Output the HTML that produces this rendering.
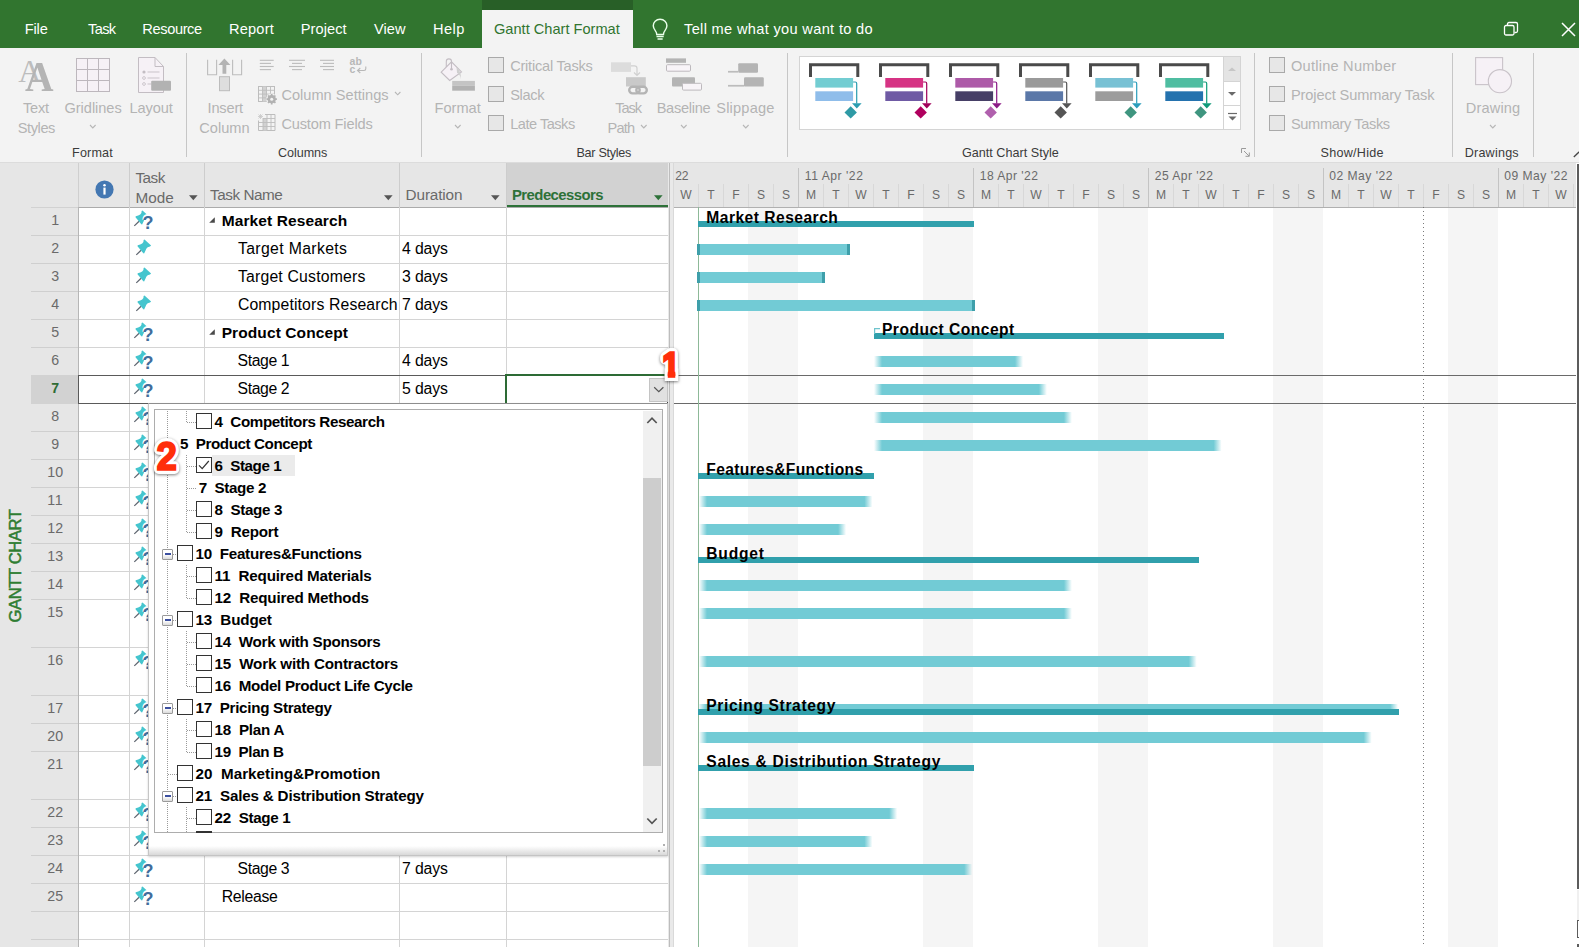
<!DOCTYPE html>
<html><head><meta charset='utf-8'><title>Gantt Chart</title><style>
html,body{margin:0;padding:0;}
body{width:1579px;height:947px;position:relative;overflow:hidden;background:#fff;font-family:'Liberation Sans',sans-serif;}
#r{position:absolute;left:0;top:0;width:1579px;height:947px;overflow:hidden;}
#r div{position:absolute;box-sizing:border-box;}
#r svg{position:absolute;overflow:visible;}
.t{position:absolute;white-space:pre;}
</style></head><body><div id='r'>
<div style="left:0px;top:0px;width:1579px;height:47.6px;background:#31752f;"></div>
<div style="left:482px;top:0px;width:151px;height:10px;background:#285f27;"></div>
<div style="left:482px;top:10px;width:151px;height:38px;background:#f3f3f3;"></div>
<span class="t" style="left:24.80px;top:18.84px;font-size:14.6px;line-height:20px;color:#fff;letter-spacing:-0.179px;">File</span>
<span class="t" style="left:88.00px;top:18.84px;font-size:14.6px;line-height:20px;color:#fff;letter-spacing:-0.629px;">Task</span>
<span class="t" style="left:142.30px;top:18.84px;font-size:14.6px;line-height:20px;color:#fff;letter-spacing:-0.371px;">Resource</span>
<span class="t" style="left:229.00px;top:18.84px;font-size:14.6px;line-height:20px;color:#fff;letter-spacing:0.198px;">Report</span>
<span class="t" style="left:300.80px;top:18.84px;font-size:14.6px;line-height:20px;color:#fff;letter-spacing:0.054px;">Project</span>
<span class="t" style="left:374.00px;top:18.84px;font-size:14.6px;line-height:20px;color:#fff;letter-spacing:0.056px;">View</span>
<span class="t" style="left:433.00px;top:18.84px;font-size:14.6px;line-height:20px;color:#fff;letter-spacing:0.446px;">Help</span>
<span class="t" style="left:494.00px;top:18.84px;font-size:14.6px;line-height:20px;color:#31752f;">Gantt Chart Format</span>
<span class="t" style="left:684.00px;top:18.84px;font-size:14.6px;line-height:20px;color:#fff;letter-spacing:0.330px;">Tell me what you want to do</span>
<svg style="left:650.3px;top:17.6px" width="20.2" height="24.6" viewBox="0 0 18 22"><path d="M9 1.2c-3.6 0-6.1 2.6-6.1 5.8 0 2 .9 3.3 1.9 4.5.8 1 1.2 1.9 1.2 3.2h6c0-1.3.4-2.2 1.2-3.2 1-1.2 1.9-2.5 1.9-4.5 0-3.2-2.500-5.800-6.100-5.800z" fill="none" stroke="#e9ffe9" stroke-width="1.300"/><path d="M5.800 16.500h6.400M6.700 18.800h4.600" stroke="#e9ffe9" stroke-width="1.300" fill="none"/></svg>
<svg style="left:1503px;top:21px" width="16" height="16" viewBox="0 0 16 16"><rect x="1.5" y="4.500" width="9.500" height="9.500" rx="1.500" fill="none" stroke="#fff" stroke-width="1.300"/><path d="M4.500 4.500v-1.500a1.500 1.500 0 0 1 1.500-1.500h7a1.500 1.500 0 0 1 1.500 1.500v7a1.500 1.500 0 0 1-1.500 1.500h-1.500" fill="none" stroke="#fff" stroke-width="1.300"/></svg>
<svg style="left:1561px;top:22px" width="15" height="15" viewBox="0 0 15 15"><path d="M1 1l13 13M14 1L1 14" stroke="#fff" stroke-width="1.500" fill="none"/></svg>
<div style="left:0px;top:47.6px;width:1579px;height:115px;background:#f3f3f3;"></div>
<span class="t" style="left:18.2px;top:51.2px;font-family:'Liberation Serif',serif;font-size:32px;line-height:40px;color:#bdbdbd;">A</span>
<span class="t" style="left:24.6px;top:52.2px;font-family:'Liberation Serif',serif;font-size:42px;font-weight:700;line-height:50px;color:#b4b4b4;transform:scaleX(.94);transform-origin:left;">A</span>
<span class="t" style="left:23.10px;top:98.04px;font-size:14.6px;line-height:20px;color:#b4b4b4;letter-spacing:-0.266px;">Text</span>
<span class="t" style="left:17.75px;top:117.94px;font-size:14.6px;line-height:20px;color:#b4b4b4;letter-spacing:-0.417px;">Styles</span>
<svg style="left:76px;top:58px" width="34" height="34" viewBox="0 0 34 34"><rect x="0.5" y="0.5" width="33" height="33" fill="#f6f1f6" stroke="#bdb7bd"/><path d="M11.500 0.500v33M22.500 0.500v33M0.500 11.500h33M0.500 22.500h33" stroke="#bdb7bd" fill="none"/></svg>
<span class="t" style="left:64.50px;top:98.04px;font-size:14.6px;line-height:20px;color:#b4b4b4;letter-spacing:-0.044px;">Gridlines</span>
<svg style="left:89.1px;top:124.2px" width="7.6" height="4.9"><path d="M1 1l2.80 2.90l2.80 -2.90" fill="none" stroke="#b6b6b6" stroke-width="1.1"/></svg>
<svg style="left:138px;top:57px" width="34" height="37" viewBox="0 0 34 37"><path d="M0.500 0.500h16.500l8.500 9v26h-25z" fill="#f6f1f6" stroke="#c3bdc3"/><path d="M17 0.500v9h8.500" fill="none" stroke="#c3bdc3"/><circle cx="6" cy="15" r="1.600" fill="#c3bdc3"/><circle cx="6" cy="21" r="1.400" fill="none" stroke="#c3bdc3" stroke-width=".8"/><circle cx="6" cy="27" r="1.400" fill="none" stroke="#c3bdc3" stroke-width=".8"/><path d="M9.500 15h12M9.500 21h12M9.500 27h4" stroke="#c9c3c9" fill="none"/><rect x="13.200" y="23.800" width="19.800" height="10" rx="1" fill="#b2b2b2"/></svg>
<span class="t" style="left:129.50px;top:98.04px;font-size:14.6px;line-height:20px;color:#b4b4b4;letter-spacing:-0.088px;">Layout</span>
<span class="t" style="left:72.00px;top:142.63px;font-size:12.6px;line-height:20px;color:#3b3b3b;letter-spacing:0.185px;">Format</span>
<div style="left:186.1px;top:53px;width:1px;height:104px;background:#c6c6c6;"></div>
<svg style="left:207px;top:58px" width="36" height="34" viewBox="0 0 36 34"><path d="M0.600 1.700v15h9v-15M25.600 1.700v15h9v-15" fill="none" stroke="#bdbdbd" stroke-width="1.100"/><path d="M17.400 0.600l-6 6.300h4.100v8.800h3.800v-8.800h4.100z" fill="#b4b4b4"/><rect x="12.500" y="18.700" width="10" height="14" fill="#dedede" stroke="#bcbcbc"/></svg>
<span class="t" style="left:207.50px;top:98.04px;font-size:14.6px;line-height:20px;color:#b4b4b4;letter-spacing:-0.167px;">Insert</span>
<span class="t" style="left:199.20px;top:117.94px;font-size:14.6px;line-height:20px;color:#b4b4b4;letter-spacing:0.017px;">Column</span>
<svg style="left:0;top:0" width="1" height="1"><path d="M259.8 60.3H273.7" stroke="#bcbcbc" stroke-width="1.100"/><path d="M259.8 63.4H271.0" stroke="#bcbcbc" stroke-width="1.100"/><path d="M259.8 66.5H273.7" stroke="#bcbcbc" stroke-width="1.100"/><path d="M259.8 69.6H271.0" stroke="#bcbcbc" stroke-width="1.100"/></svg>
<svg style="left:0;top:0" width="1" height="1"><path d="M289.0 60.3H305.0" stroke="#bcbcbc" stroke-width="1.100"/><path d="M292.0 63.4H302.0" stroke="#bcbcbc" stroke-width="1.100"/><path d="M289.0 66.5H305.0" stroke="#bcbcbc" stroke-width="1.100"/><path d="M292.0 69.6H302.0" stroke="#bcbcbc" stroke-width="1.100"/></svg>
<svg style="left:0;top:0" width="1" height="1"><path d="M320.0 60.3H334.0" stroke="#bcbcbc" stroke-width="1.100"/><path d="M323.0 63.4H334.0" stroke="#bcbcbc" stroke-width="1.100"/><path d="M320.0 66.5H334.0" stroke="#bcbcbc" stroke-width="1.100"/><path d="M323.0 69.6H334.0" stroke="#bcbcbc" stroke-width="1.100"/></svg>
<span class="t" style="left:349.40px;top:51.36px;font-size:10.5px;line-height:20px;color:#b8b8b8;font-weight:700;letter-spacing:0.300px;">ab</span>
<span class="t" style="left:349.60px;top:59.36px;font-size:10.5px;line-height:20px;color:#b8b8b8;font-weight:700;">c</span>
<svg style="left:356px;top:66px" width="11" height="8" viewBox="0 0 11 8"><path d="M9.800 0.500v2.300q0 1.700 -1.700 1.700h-6.500M4.300 2l-2.800 2.500l2.800 2.500" fill="none" stroke="#b8b8b8" stroke-width="1.100"/></svg>
<svg style="left:258px;top:85.5px" width="20" height="19" viewBox="0 0 20 19"><rect x="0.500" y="0.500" width="16" height="15" fill="#f3f3f3" stroke="#bdbdbd"/><rect x="4.500" y="0.500" width="4" height="15" fill="#d2d2d2"/><path d="M4.500 0.500v15M8.500 0.500v15M12.500 0.500v9M0.500 4.300h16M0.500 8.100h16M0.500 11.900h9" stroke="#bdbdbd" fill="none" stroke-width=".9"/><circle cx="13.700" cy="13.200" r="5.600" fill="#f3f3f3"/><circle cx="13.700" cy="13.200" r="3" fill="none" stroke="#b2b2b2" stroke-width="2.200"/><path d="M13.700 8v10.400M8.500 13.200h10.400M10 9.500l7.400 7.400M17.400 9.500l-7.400 7.400" stroke="#b2b2b2" stroke-width="1.700"/><circle cx="13.700" cy="13.200" r="1.500" fill="#f3f3f3"/></svg>
<span class="t" style="left:281.40px;top:85.04px;font-size:14.6px;line-height:20px;color:#b4b4b4;letter-spacing:0.008px;">Column Settings</span>
<svg style="left:394.3px;top:90.8px" width="7.4" height="4.8"><path d="M1 1l2.70 2.80l2.70 -2.80" fill="none" stroke="#b6b6b6" stroke-width="1.1"/></svg>
<svg style="left:258.4px;top:114px" width="18" height="17" viewBox="0 0 18 17"><path d="M0.500 6.500v10h16.500v-16h-10" fill="none" stroke="#bdbdbd"/><rect x="5" y="4.500" width="4" height="12" fill="#d2d2d2"/><path d="M5 4.500v12M9 0.500v16M13 0.500v16M0.500 8.500h16.500M0.500 12.500h16.500M5 4.500h12" stroke="#bdbdbd" fill="none" stroke-width=".9"/><path d="M0.500 0.500l4 4M4.500 0.500l-4 4M2.500 0v5M0 2.500h5" stroke="#c6c6c6" stroke-width=".8"/></svg>
<span class="t" style="left:281.40px;top:113.94px;font-size:14.6px;line-height:20px;color:#b4b4b4;letter-spacing:-0.159px;">Custom Fields</span>
<span class="t" style="left:278.00px;top:142.63px;font-size:12.6px;line-height:20px;color:#3b3b3b;letter-spacing:-0.058px;">Columns</span>
<div style="left:421.0px;top:53px;width:1px;height:104px;background:#c6c6c6;"></div>
<svg style="left:440px;top:58px" width="36" height="34" viewBox="0 0 36 34"><path d="M1.200 14.200l10.300 -10.300l10 10l-11.800 8.600z" fill="#f6f1f6" stroke="#c3bdc3" stroke-width="1.100"/><path d="M11.500 11v-7.500a2.600 2.600 0 0 0 -5.200 0v5.500" fill="none" stroke="#c3bdc3" stroke-width="1.100"/><circle cx="11.500" cy="11.200" r="1.300" fill="#c3bdc3"/><path d="M16.500 9.500q4.500 2.500 4.600 12q-1 -5.500 -4 -6.500z" fill="#cfcfcf"/><rect x="12.200" y="22.900" width="22.700" height="4.800" fill="#c4c4c4"/><rect x="12.200" y="27.700" width="22.700" height="5" fill="#b2b2b2"/></svg>
<span class="t" style="left:434.50px;top:98.04px;font-size:14.6px;line-height:20px;color:#b4b4b4;">Format</span>
<svg style="left:454.2px;top:124.2px" width="7.6" height="4.9"><path d="M1 1l2.80 2.90l2.80 -2.90" fill="none" stroke="#b6b6b6" stroke-width="1.1"/></svg>
<div style="left:488px;top:57px;width:16px;height:16px;background:#e7e7e7;border:1.3px solid #a9a9a9;"></div>
<div style="left:488px;top:86px;width:16px;height:16px;background:#e7e7e7;border:1.3px solid #a9a9a9;"></div>
<div style="left:488px;top:115px;width:16px;height:16px;background:#e7e7e7;border:1.3px solid #a9a9a9;"></div>
<span class="t" style="left:510.20px;top:56.14px;font-size:14.6px;line-height:20px;color:#b4b4b4;letter-spacing:-0.236px;">Critical Tasks</span>
<span class="t" style="left:510.20px;top:85.04px;font-size:14.6px;line-height:20px;color:#b4b4b4;letter-spacing:-0.357px;">Slack</span>
<span class="t" style="left:510.20px;top:113.94px;font-size:14.6px;line-height:20px;color:#b4b4b4;letter-spacing:-0.500px;">Late Tasks</span>
<svg style="left:611px;top:62px" width="38" height="34" viewBox="0 0 38 34"><rect x="0" y="0.300" width="20" height="9.600" fill="#dcdcdc"/><path d="M20 3.800h3.500q2.500 0 2.500 2.500v6.500M23 10.500l3 3l3 -3" fill="none" stroke="#d0d0d0" stroke-width="1.200"/><rect x="15" y="15.200" width="19.800" height="9.300" fill="#c9c9c9"/><g fill="none" stroke="#b4b4b4" stroke-width="2.400"><rect x="18.200" y="24.800" width="10.500" height="6.600" rx="3.300"/><rect x="25.300" y="24.800" width="10.500" height="6.600" rx="3.300"/></g></svg>
<span class="t" style="left:615.20px;top:98.04px;font-size:14.6px;line-height:20px;color:#b4b4b4;letter-spacing:-1.054px;">Task</span>
<span class="t" style="left:607.50px;top:117.94px;font-size:14.6px;line-height:20px;color:#b4b4b4;letter-spacing:-0.783px;">Path</span>
<svg style="left:640.3px;top:124.2px" width="7.6" height="4.9"><path d="M1 1l2.80 2.90l2.80 -2.90" fill="none" stroke="#b6b6b6" stroke-width="1.1"/></svg>
<svg style="left:666px;top:58px" width="37" height="34" viewBox="0 0 37 34"><rect x="0" y="0.400" width="20" height="4.400" fill="#b4b4b4"/><rect x="0.500" y="6.700" width="24" height="6.500" rx="1" fill="#f8f4f8" stroke="#bdb9bd"/><rect x="6" y="19.200" width="23" height="9.300" rx="1" fill="#b4b4b4"/><rect x="16.500" y="25.300" width="19" height="6.800" rx="1" fill="#f8f4f8" stroke="#bdb9bd"/></svg>
<span class="t" style="left:656.70px;top:98.04px;font-size:14.6px;line-height:20px;color:#b4b4b4;letter-spacing:-0.298px;">Baseline</span>
<svg style="left:680.2px;top:124.2px" width="7.6" height="4.9"><path d="M1 1l2.80 2.90l2.80 -2.90" fill="none" stroke="#b6b6b6" stroke-width="1.1"/></svg>
<svg style="left:728px;top:63px" width="37" height="25" viewBox="0 0 37 25"><rect x="10.200" y="0.200" width="19.800" height="9.500" rx="1.200" fill="#b4b4b4"/><rect x="0" y="7.900" width="10.200" height="1.700" fill="#bcbcbc"/><rect x="16" y="14.200" width="19.800" height="9.400" rx="1.200" fill="#b4b4b4"/><rect x="0" y="21.900" width="16" height="1.700" fill="#bcbcbc"/></svg>
<span class="t" style="left:716.20px;top:98.04px;font-size:14.6px;line-height:20px;color:#b4b4b4;letter-spacing:0.211px;">Slippage</span>
<svg style="left:742.0px;top:124.2px" width="7.6" height="4.9"><path d="M1 1l2.80 2.90l2.80 -2.90" fill="none" stroke="#b6b6b6" stroke-width="1.1"/></svg>
<span class="t" style="left:576.50px;top:142.63px;font-size:12.6px;line-height:20px;color:#3b3b3b;letter-spacing:-0.291px;">Bar Styles</span>
<div style="left:787.1px;top:53px;width:1px;height:104px;background:#c6c6c6;"></div>
<div style="left:799px;top:55.5px;width:442px;height:74px;background:#fff;border:1px solid #d4d4d4;"></div>
<div style="left:1222.5px;top:55.5px;width:18.5px;height:26px;background:#e4e4e4;border:1px solid #d4d4d4;"></div>
<div style="left:1222.5px;top:80.5px;width:18.5px;height:25px;background:#fff;border:1px solid #d4d4d4;"></div>
<div style="left:1222.5px;top:104.5px;width:18.5px;height:25px;background:#fff;border:1px solid #d4d4d4;"></div>
<svg style="left:1227px;top:66px" width="10" height="6"><path d="M1 5l4 -3.500l4 3.500z" fill="#c6c6c6"/></svg>
<svg style="left:1227px;top:91px" width="10" height="6"><path d="M1 1l4 3.800l4 -3.800z" fill="#6a6a6a"/></svg>
<svg style="left:1226.500px;top:112px" width="11" height="11"><path d="M1 1.500h9" stroke="#6a6a6a" stroke-width="1.200"/><path d="M1.500 4.500l4 4l4 -4z" fill="#6a6a6a"/></svg>
<svg style="left:808.70px;top:63px" width="54" height="60" viewBox="0 0 54 60"><path d="M1.500 14v-12.300h47.300v12.300" fill="none" stroke="#4a4a4a" stroke-width="3"/><rect x="6.300" y="15" width="37.800" height="9.600" fill="#73cdd2"/><rect x="6.300" y="28.300" width="37.800" height="9.700" fill="#8fbdea"/><path d="M44.100 19h2.200q1.400 0 1.400 1.400v20" fill="none" stroke="#2a9db0" stroke-width="1.200"/><path d="M43 40.300h9.600l-4.800 5.200z" fill="#2a9db0"/><path d="M41.700 43.200l6.200 6.200l-6.200 6.200l-6.200 -6.200z" fill="#2f9aa5"/></svg>
<svg style="left:878.75px;top:63px" width="54" height="60" viewBox="0 0 54 60"><path d="M1.500 14v-12.300h47.300v12.300" fill="none" stroke="#4a4a4a" stroke-width="3"/><rect x="6.300" y="15" width="37.800" height="9.600" fill="#d63384"/><rect x="6.300" y="28.300" width="37.800" height="9.700" fill="#6f5aa4"/><path d="M44.100 19h2.200q1.400 0 1.400 1.400v20" fill="none" stroke="#a1005a" stroke-width="1.200"/><path d="M43 40.300h9.600l-4.800 5.200z" fill="#a1005a"/><path d="M41.700 43.200l6.200 6.200l-6.200 6.200l-6.200 -6.200z" fill="#b0005e"/></svg>
<svg style="left:948.80px;top:63px" width="54" height="60" viewBox="0 0 54 60"><path d="M1.500 14v-12.300h47.300v12.300" fill="none" stroke="#4a4a4a" stroke-width="3"/><rect x="6.300" y="15" width="37.800" height="9.600" fill="#ad5aa8"/><rect x="6.300" y="28.300" width="37.800" height="9.700" fill="#463f66"/><path d="M44.100 19h2.200q1.400 0 1.400 1.400v20" fill="none" stroke="#8c1a86" stroke-width="1.200"/><path d="M43 40.300h9.600l-4.800 5.200z" fill="#8c1a86"/><path d="M41.700 43.200l6.200 6.200l-6.200 6.200l-6.200 -6.200z" fill="#b060ad"/></svg>
<svg style="left:1018.85px;top:63px" width="54" height="60" viewBox="0 0 54 60"><path d="M1.500 14v-12.300h47.300v12.300" fill="none" stroke="#4a4a4a" stroke-width="3"/><rect x="6.300" y="15" width="37.800" height="9.600" fill="#9a9a9a"/><rect x="6.300" y="28.300" width="37.800" height="9.700" fill="#5b78a8"/><path d="M44.100 19h2.200q1.400 0 1.400 1.400v20" fill="none" stroke="#555" stroke-width="1.200"/><path d="M43 40.300h9.600l-4.800 5.200z" fill="#555"/><path d="M41.700 43.200l6.200 6.200l-6.200 6.200l-6.200 -6.200z" fill="#555"/></svg>
<svg style="left:1088.90px;top:63px" width="54" height="60" viewBox="0 0 54 60"><path d="M1.500 14v-12.300h47.300v12.300" fill="none" stroke="#4a4a4a" stroke-width="3"/><rect x="6.300" y="15" width="37.800" height="9.600" fill="#78c1d4"/><rect x="6.300" y="28.300" width="37.800" height="9.700" fill="#9c9c9c"/><path d="M44.100 19h2.200q1.400 0 1.400 1.400v20" fill="none" stroke="#2a9dbb" stroke-width="1.200"/><path d="M43 40.300h9.600l-4.800 5.200z" fill="#2a9dbb"/><path d="M41.700 43.200l6.200 6.200l-6.200 6.200l-6.200 -6.200z" fill="#3f957f"/></svg>
<svg style="left:1158.95px;top:63px" width="54" height="60" viewBox="0 0 54 60"><path d="M1.500 14v-12.300h47.300v12.300" fill="none" stroke="#4a4a4a" stroke-width="3"/><rect x="6.300" y="15" width="37.800" height="9.600" fill="#4fbda1"/><rect x="6.300" y="28.300" width="37.800" height="9.700" fill="#2472ae"/><path d="M44.100 19h2.200q1.400 0 1.400 1.400v20" fill="none" stroke="#0f9a78" stroke-width="1.200"/><path d="M43 40.300h9.600l-4.800 5.200z" fill="#0f9a78"/><path d="M41.700 43.200l6.200 6.200l-6.200 6.200l-6.200 -6.200z" fill="#3f957f"/></svg>
<span class="t" style="left:962.00px;top:142.63px;font-size:12.6px;line-height:20px;color:#3b3b3b;letter-spacing:0.012px;">Gantt Chart Style</span>
<svg style="left:1241px;top:148px" width="9" height="9" viewBox="0 0 9 9"><path d="M0.500 5v-4.500h4.500M3 3l5 5M8.300 4.500v3.800h-3.800" fill="none" stroke="#9a9a9a" stroke-width="1"/></svg>
<div style="left:1254.2px;top:53px;width:1px;height:104px;background:#c6c6c6;"></div>
<div style="left:1269px;top:57px;width:16px;height:16px;background:#e7e7e7;border:1.3px solid #a9a9a9;"></div>
<div style="left:1269px;top:86px;width:16px;height:16px;background:#e7e7e7;border:1.3px solid #a9a9a9;"></div>
<div style="left:1269px;top:115px;width:16px;height:16px;background:#e7e7e7;border:1.3px solid #a9a9a9;"></div>
<span class="t" style="left:1291.00px;top:56.14px;font-size:14.6px;line-height:20px;color:#b4b4b4;letter-spacing:0.228px;">Outline Number</span>
<span class="t" style="left:1291.00px;top:85.04px;font-size:14.6px;line-height:20px;color:#b4b4b4;letter-spacing:-0.116px;">Project Summary Task</span>
<span class="t" style="left:1291.00px;top:113.94px;font-size:14.6px;line-height:20px;color:#b4b4b4;letter-spacing:-0.364px;">Summary Tasks</span>
<span class="t" style="left:1320.50px;top:142.63px;font-size:12.6px;line-height:20px;color:#3b3b3b;letter-spacing:0.255px;">Show/Hide</span>
<div style="left:1451.5px;top:53px;width:1px;height:104px;background:#c6c6c6;"></div>
<svg style="left:1474.500px;top:56.500px" width="38" height="37" viewBox="0 0 38 37"><rect x="0.600" y="0.600" width="27" height="27" fill="#f6f1f6" stroke="#c9c3c9" stroke-width="1.100"/><circle cx="24.900" cy="24.200" r="11.600" fill="#f6f1f6" stroke="#c9c3c9" stroke-width="1.100"/></svg>
<span class="t" style="left:1465.70px;top:98.04px;font-size:14.6px;line-height:20px;color:#b4b4b4;letter-spacing:0.167px;">Drawing</span>
<svg style="left:1489.2px;top:124.2px" width="7.6" height="4.9"><path d="M1 1l2.80 2.90l2.80 -2.90" fill="none" stroke="#b6b6b6" stroke-width="1.1"/></svg>
<span class="t" style="left:1464.70px;top:142.63px;font-size:12.6px;line-height:20px;color:#3b3b3b;letter-spacing:0.213px;">Drawings</span>
<div style="left:1533.0px;top:53px;width:1px;height:104px;background:#c6c6c6;"></div>
<svg style="left:1570px;top:149px" width="9" height="10"><path d="M3.800 8l5.400 -5.200" fill="none" stroke="#444" stroke-width="1.300"/></svg>
<div style="left:0px;top:162px;width:1579px;height:785px;background:#fff;"></div>
<div style="left:0px;top:162px;width:78px;height:785px;background:#e6e6e6;"></div>
<div style="left:78px;top:162px;width:591px;height:45px;background:#e6e6e6;"></div>
<div style="left:507px;top:162px;width:162px;height:45px;background:#d2d2d2;"></div>
<div style="left:507px;top:205px;width:162px;height:2px;background:#2d7138;"></div>
<div style="left:31px;top:207px;width:47px;height:1px;background:#d2d2d2;"></div>
<div style="left:78px;top:207px;width:591px;height:1px;background:#ababab;"></div>
<div style="left:31px;top:235px;width:47px;height:1px;background:#cfcfcf;"></div>
<div style="left:78px;top:235px;width:591px;height:1px;background:#d4d4d4;"></div>
<div style="left:31px;top:263px;width:47px;height:1px;background:#cfcfcf;"></div>
<div style="left:78px;top:263px;width:591px;height:1px;background:#d4d4d4;"></div>
<div style="left:31px;top:291px;width:47px;height:1px;background:#cfcfcf;"></div>
<div style="left:78px;top:291px;width:591px;height:1px;background:#d4d4d4;"></div>
<div style="left:31px;top:319px;width:47px;height:1px;background:#cfcfcf;"></div>
<div style="left:78px;top:319px;width:591px;height:1px;background:#d4d4d4;"></div>
<div style="left:31px;top:347px;width:47px;height:1px;background:#cfcfcf;"></div>
<div style="left:78px;top:347px;width:591px;height:1px;background:#d4d4d4;"></div>
<div style="left:31px;top:375px;width:47px;height:1px;background:#cfcfcf;"></div>
<div style="left:78px;top:375px;width:591px;height:1px;background:#d4d4d4;"></div>
<div style="left:31px;top:403px;width:47px;height:1px;background:#cfcfcf;"></div>
<div style="left:78px;top:403px;width:591px;height:1px;background:#d4d4d4;"></div>
<div style="left:31px;top:431px;width:47px;height:1px;background:#cfcfcf;"></div>
<div style="left:78px;top:431px;width:591px;height:1px;background:#d4d4d4;"></div>
<div style="left:31px;top:459px;width:47px;height:1px;background:#cfcfcf;"></div>
<div style="left:78px;top:459px;width:591px;height:1px;background:#d4d4d4;"></div>
<div style="left:31px;top:487px;width:47px;height:1px;background:#cfcfcf;"></div>
<div style="left:78px;top:487px;width:591px;height:1px;background:#d4d4d4;"></div>
<div style="left:31px;top:515px;width:47px;height:1px;background:#cfcfcf;"></div>
<div style="left:78px;top:515px;width:591px;height:1px;background:#d4d4d4;"></div>
<div style="left:31px;top:543px;width:47px;height:1px;background:#cfcfcf;"></div>
<div style="left:78px;top:543px;width:591px;height:1px;background:#d4d4d4;"></div>
<div style="left:31px;top:571px;width:47px;height:1px;background:#cfcfcf;"></div>
<div style="left:78px;top:571px;width:591px;height:1px;background:#d4d4d4;"></div>
<div style="left:31px;top:599px;width:47px;height:1px;background:#cfcfcf;"></div>
<div style="left:78px;top:599px;width:591px;height:1px;background:#d4d4d4;"></div>
<div style="left:31px;top:647px;width:47px;height:1px;background:#cfcfcf;"></div>
<div style="left:78px;top:647px;width:591px;height:1px;background:#d4d4d4;"></div>
<div style="left:31px;top:695px;width:47px;height:1px;background:#cfcfcf;"></div>
<div style="left:78px;top:695px;width:591px;height:1px;background:#d4d4d4;"></div>
<div style="left:31px;top:723px;width:47px;height:1px;background:#cfcfcf;"></div>
<div style="left:78px;top:723px;width:591px;height:1px;background:#d4d4d4;"></div>
<div style="left:31px;top:751px;width:47px;height:1px;background:#cfcfcf;"></div>
<div style="left:78px;top:751px;width:591px;height:1px;background:#d4d4d4;"></div>
<div style="left:31px;top:799px;width:47px;height:1px;background:#cfcfcf;"></div>
<div style="left:78px;top:799px;width:591px;height:1px;background:#d4d4d4;"></div>
<div style="left:31px;top:827px;width:47px;height:1px;background:#cfcfcf;"></div>
<div style="left:78px;top:827px;width:591px;height:1px;background:#d4d4d4;"></div>
<div style="left:31px;top:855px;width:47px;height:1px;background:#cfcfcf;"></div>
<div style="left:78px;top:855px;width:591px;height:1px;background:#d4d4d4;"></div>
<div style="left:31px;top:883px;width:47px;height:1px;background:#cfcfcf;"></div>
<div style="left:78px;top:883px;width:591px;height:1px;background:#d4d4d4;"></div>
<div style="left:31px;top:911px;width:47px;height:1px;background:#cfcfcf;"></div>
<div style="left:78px;top:911px;width:591px;height:1px;background:#d4d4d4;"></div>
<div style="left:31px;top:939px;width:47px;height:1px;background:#cfcfcf;"></div>
<div style="left:78px;top:939px;width:591px;height:1px;background:#d4d4d4;"></div>
<div style="left:129px;top:207px;width:1px;height:740px;background:#d4d4d4;"></div>
<div style="left:129px;top:162px;width:1px;height:45px;background:#cdcdcd;"></div>
<div style="left:204px;top:207px;width:1px;height:740px;background:#d4d4d4;"></div>
<div style="left:204px;top:162px;width:1px;height:45px;background:#cdcdcd;"></div>
<div style="left:399px;top:207px;width:1px;height:740px;background:#d4d4d4;"></div>
<div style="left:399px;top:162px;width:1px;height:45px;background:#cdcdcd;"></div>
<div style="left:506px;top:207px;width:1px;height:740px;background:#d4d4d4;"></div>
<div style="left:506px;top:162px;width:1px;height:45px;background:#cdcdcd;"></div>
<div style="left:78px;top:162px;width:1px;height:45px;background:#cfcfcf;"></div>
<div style="left:78px;top:207px;width:1px;height:740px;background:#b6b6b6;"></div>
<div style="left:31px;top:375px;width:47px;height:29px;background:#d2d2d2;"></div>
<div style="left:78px;top:375px;width:591px;height:1px;background:#5a5a5a;"></div>
<div style="left:78px;top:403px;width:591px;height:1px;background:#5a5a5a;"></div>
<div style="left:78px;top:375px;width:1px;height:29px;background:#5a5a5a;"></div>
<div style="left:505.2px;top:374px;width:164px;height:30px;background:transparent;border:2px solid #2d6b35;border-right:none;border-bottom:none;"></div>
<div style="left:666.5px;top:401.5px;width:2px;height:2px;background:#444;"></div>
<div style="left:649px;top:377.5px;width:18.5px;height:24.5px;background:#e1e1e1;border:1px solid #c4c4c4;"></div>
<svg style="left:653px;top:386px" width="12" height="8"><path d="M1.200 1.200l4.600 4.500l4.600 -4.500" fill="none" stroke="#555" stroke-width="1.200"/></svg>
<div style="left:668px;top:162px;width:6px;height:785px;background:#e9e9e9;"></div>
<div style="left:668.5px;top:162px;width:1.6px;height:785px;background:#bdbdbd;"></div>
<div style="left:673px;top:162px;width:1px;height:785px;background:#d9d9d9;"></div>
<span class="t" style="left:135.50px;top:168.10px;font-size:15.3px;line-height:20px;color:#6a6a6a;letter-spacing:-0.538px;">Task</span>
<span class="t" style="left:135.50px;top:187.70px;font-size:15.3px;line-height:20px;color:#6a6a6a;letter-spacing:0.009px;">Mode</span>
<span class="t" style="left:210.00px;top:185.10px;font-size:15.3px;line-height:20px;color:#6a6a6a;letter-spacing:-0.457px;">Task Name</span>
<span class="t" style="left:405.60px;top:185.10px;font-size:15.3px;line-height:20px;color:#6a6a6a;letter-spacing:-0.129px;">Duration</span>
<span class="t" style="left:512.00px;top:185.24px;font-size:14.9px;line-height:20px;color:#2d7138;font-weight:700;letter-spacing:-0.557px;">Predecessors</span>
<svg style="left:189px;top:194.8px" width="9" height="6"><path d="M0 0.300h8.600l-4.300 4.900z" fill="#555"/></svg>
<svg style="left:383.5px;top:194.8px" width="9" height="6"><path d="M0 0.300h8.600l-4.300 4.900z" fill="#555"/></svg>
<svg style="left:490.8px;top:194.8px" width="9" height="6"><path d="M0 0.300h8.600l-4.300 4.900z" fill="#555"/></svg>
<svg style="left:654px;top:194.8px" width="9" height="6"><path d="M0 0.300h8.600l-4.300 4.900z" fill="#2d7138"/></svg>
<svg style="left:94.500px;top:180.200px" width="19" height="19" viewBox="0 0 19 19"><circle cx="9.500" cy="9.500" r="9.100" fill="#4377b2"/><rect x="8.400" y="7.600" width="2.200" height="7" fill="#fff"/><circle cx="9.500" cy="5.200" r="1.250" fill="#fff"/></svg>
<span class="t" style="left:16px;top:566px;font-size:16.6px;line-height:20px;color:#2f7d32;transform:translate(-50%,-50%) rotate(-90deg);letter-spacing:-0.400px;-webkit-text-stroke:0.500px #2f7d32;">GANTT CHART</span>
<span class="t" style="left:51.25px;top:210.28px;font-size:14.2px;line-height:20px;color:#6a6a6a;">1</span>
<span class="t" style="left:51.25px;top:238.28px;font-size:14.2px;line-height:20px;color:#6a6a6a;">2</span>
<span class="t" style="left:51.25px;top:266.28px;font-size:14.2px;line-height:20px;color:#6a6a6a;">3</span>
<span class="t" style="left:51.25px;top:294.28px;font-size:14.2px;line-height:20px;color:#6a6a6a;">4</span>
<span class="t" style="left:51.25px;top:322.28px;font-size:14.2px;line-height:20px;color:#6a6a6a;">5</span>
<span class="t" style="left:51.25px;top:350.28px;font-size:14.2px;line-height:20px;color:#6a6a6a;">6</span>
<span class="t" style="left:51.25px;top:378.28px;font-size:14.2px;line-height:20px;color:#2f6b35;font-weight:700;">7</span>
<span class="t" style="left:51.25px;top:406.28px;font-size:14.2px;line-height:20px;color:#6a6a6a;">8</span>
<span class="t" style="left:51.25px;top:434.28px;font-size:14.2px;line-height:20px;color:#6a6a6a;">9</span>
<span class="t" style="left:47.30px;top:462.28px;font-size:14.2px;line-height:20px;color:#6a6a6a;letter-spacing:0.009px;">10</span>
<span class="t" style="left:47.30px;top:490.28px;font-size:14.2px;line-height:20px;color:#6a6a6a;letter-spacing:0.533px;">11</span>
<span class="t" style="left:47.30px;top:518.28px;font-size:14.2px;line-height:20px;color:#6a6a6a;letter-spacing:0.009px;">12</span>
<span class="t" style="left:47.30px;top:546.28px;font-size:14.2px;line-height:20px;color:#6a6a6a;letter-spacing:0.009px;">13</span>
<span class="t" style="left:47.30px;top:574.28px;font-size:14.2px;line-height:20px;color:#6a6a6a;letter-spacing:0.009px;">14</span>
<span class="t" style="left:47.30px;top:602.28px;font-size:14.2px;line-height:20px;color:#6a6a6a;letter-spacing:0.009px;">15</span>
<span class="t" style="left:47.30px;top:650.28px;font-size:14.2px;line-height:20px;color:#6a6a6a;letter-spacing:0.009px;">16</span>
<span class="t" style="left:47.30px;top:698.28px;font-size:14.2px;line-height:20px;color:#6a6a6a;letter-spacing:0.009px;">17</span>
<span class="t" style="left:47.30px;top:726.28px;font-size:14.2px;line-height:20px;color:#6a6a6a;letter-spacing:0.009px;">20</span>
<span class="t" style="left:47.30px;top:754.28px;font-size:14.2px;line-height:20px;color:#6a6a6a;letter-spacing:0.009px;">21</span>
<span class="t" style="left:47.30px;top:802.28px;font-size:14.2px;line-height:20px;color:#6a6a6a;letter-spacing:0.009px;">22</span>
<span class="t" style="left:47.30px;top:830.28px;font-size:14.2px;line-height:20px;color:#6a6a6a;letter-spacing:0.009px;">23</span>
<span class="t" style="left:47.30px;top:858.28px;font-size:14.2px;line-height:20px;color:#6a6a6a;letter-spacing:0.009px;">24</span>
<span class="t" style="left:47.30px;top:886.28px;font-size:14.2px;line-height:20px;color:#6a6a6a;letter-spacing:0.009px;">25</span>
<svg style="left:133.8px;top:210.0px" width="16.0" height="17.0" viewBox="0 0 16 17"><path d="M0.300 15.900l4.800 -4.600" stroke="#5f6670" stroke-width="1.250" fill="none"/><path d="M8.500 0.400L15.100 6.500L14 7.400Q11.200 7.600 10.300 9.700Q9.600 11.500 8.100 14.400L7.300 14.300L1.500 7.200L1.700 6.300Q4.500 5.600 6.200 4.500Q7.900 3.400 7.600 1.100Z" fill="#45c5ce"/></svg>
<span class="t" style="left:142.4px;top:212.0px;font-size:18px;line-height:20px;font-weight:700;color:#fff;-webkit-text-stroke:1.800px #fff;">?</span>
<span class="t" style="left:142.40px;top:212.96px;font-size:18px;line-height:20px;color:#416d9c;font-weight:700;">?</span>
<svg style="left:135.8px;top:238.8px" width="16.0" height="17.0" viewBox="0 0 16 17"><path d="M0.300 15.900l4.800 -4.600" stroke="#5f6670" stroke-width="1.250" fill="none"/><path d="M8.500 0.400L15.100 6.500L14 7.400Q11.200 7.600 10.300 9.700Q9.600 11.500 8.100 14.400L7.300 14.300L1.500 7.200L1.700 6.300Q4.500 5.600 6.200 4.500Q7.900 3.400 7.600 1.100Z" fill="#45c5ce"/></svg>
<svg style="left:135.8px;top:266.8px" width="16.0" height="17.0" viewBox="0 0 16 17"><path d="M0.300 15.900l4.800 -4.600" stroke="#5f6670" stroke-width="1.250" fill="none"/><path d="M8.500 0.400L15.100 6.500L14 7.400Q11.200 7.600 10.300 9.700Q9.600 11.500 8.100 14.400L7.300 14.300L1.500 7.200L1.700 6.300Q4.500 5.600 6.200 4.500Q7.900 3.400 7.600 1.100Z" fill="#45c5ce"/></svg>
<svg style="left:135.8px;top:294.8px" width="16.0" height="17.0" viewBox="0 0 16 17"><path d="M0.300 15.900l4.800 -4.600" stroke="#5f6670" stroke-width="1.250" fill="none"/><path d="M8.500 0.400L15.100 6.500L14 7.400Q11.200 7.600 10.300 9.700Q9.600 11.500 8.100 14.400L7.300 14.300L1.500 7.200L1.700 6.300Q4.500 5.600 6.200 4.500Q7.900 3.400 7.600 1.100Z" fill="#45c5ce"/></svg>
<svg style="left:133.8px;top:322.0px" width="16.0" height="17.0" viewBox="0 0 16 17"><path d="M0.300 15.900l4.800 -4.600" stroke="#5f6670" stroke-width="1.250" fill="none"/><path d="M8.500 0.400L15.100 6.500L14 7.400Q11.200 7.600 10.300 9.700Q9.600 11.500 8.100 14.400L7.300 14.300L1.500 7.200L1.700 6.300Q4.500 5.600 6.200 4.500Q7.900 3.400 7.600 1.100Z" fill="#45c5ce"/></svg>
<span class="t" style="left:142.4px;top:324.0px;font-size:18px;line-height:20px;font-weight:700;color:#fff;-webkit-text-stroke:1.800px #fff;">?</span>
<span class="t" style="left:142.40px;top:324.96px;font-size:18px;line-height:20px;color:#416d9c;font-weight:700;">?</span>
<svg style="left:133.8px;top:350.0px" width="16.0" height="17.0" viewBox="0 0 16 17"><path d="M0.300 15.900l4.800 -4.600" stroke="#5f6670" stroke-width="1.250" fill="none"/><path d="M8.500 0.400L15.100 6.500L14 7.400Q11.200 7.600 10.300 9.700Q9.600 11.500 8.100 14.400L7.300 14.300L1.500 7.200L1.700 6.300Q4.500 5.600 6.200 4.500Q7.900 3.400 7.600 1.100Z" fill="#45c5ce"/></svg>
<span class="t" style="left:142.4px;top:352.0px;font-size:18px;line-height:20px;font-weight:700;color:#fff;-webkit-text-stroke:1.800px #fff;">?</span>
<span class="t" style="left:142.40px;top:352.96px;font-size:18px;line-height:20px;color:#416d9c;font-weight:700;">?</span>
<svg style="left:133.8px;top:378.0px" width="16.0" height="17.0" viewBox="0 0 16 17"><path d="M0.300 15.900l4.800 -4.600" stroke="#5f6670" stroke-width="1.250" fill="none"/><path d="M8.500 0.400L15.100 6.500L14 7.400Q11.200 7.600 10.300 9.700Q9.600 11.500 8.100 14.400L7.300 14.300L1.500 7.200L1.700 6.300Q4.500 5.600 6.200 4.500Q7.900 3.400 7.600 1.100Z" fill="#45c5ce"/></svg>
<span class="t" style="left:142.4px;top:380.0px;font-size:18px;line-height:20px;font-weight:700;color:#fff;-webkit-text-stroke:1.800px #fff;">?</span>
<span class="t" style="left:142.40px;top:380.96px;font-size:18px;line-height:20px;color:#416d9c;font-weight:700;">?</span>
<svg style="left:133.8px;top:406.0px" width="16.0" height="17.0" viewBox="0 0 16 17"><path d="M0.300 15.900l4.800 -4.600" stroke="#5f6670" stroke-width="1.250" fill="none"/><path d="M8.500 0.400L15.100 6.500L14 7.400Q11.200 7.600 10.300 9.700Q9.600 11.500 8.100 14.400L7.300 14.300L1.500 7.200L1.700 6.300Q4.500 5.600 6.200 4.500Q7.900 3.400 7.600 1.100Z" fill="#45c5ce"/></svg>
<span class="t" style="left:142.4px;top:408.0px;font-size:18px;line-height:20px;font-weight:700;color:#fff;-webkit-text-stroke:1.800px #fff;">?</span>
<span class="t" style="left:142.40px;top:408.96px;font-size:18px;line-height:20px;color:#416d9c;font-weight:700;">?</span>
<svg style="left:133.8px;top:434.0px" width="16.0" height="17.0" viewBox="0 0 16 17"><path d="M0.300 15.900l4.800 -4.600" stroke="#5f6670" stroke-width="1.250" fill="none"/><path d="M8.500 0.400L15.100 6.500L14 7.400Q11.200 7.600 10.300 9.700Q9.600 11.500 8.100 14.400L7.300 14.300L1.500 7.200L1.700 6.300Q4.500 5.600 6.200 4.500Q7.900 3.400 7.600 1.100Z" fill="#45c5ce"/></svg>
<span class="t" style="left:142.4px;top:436.0px;font-size:18px;line-height:20px;font-weight:700;color:#fff;-webkit-text-stroke:1.800px #fff;">?</span>
<span class="t" style="left:142.40px;top:436.96px;font-size:18px;line-height:20px;color:#416d9c;font-weight:700;">?</span>
<svg style="left:133.8px;top:462.0px" width="16.0" height="17.0" viewBox="0 0 16 17"><path d="M0.300 15.900l4.800 -4.600" stroke="#5f6670" stroke-width="1.250" fill="none"/><path d="M8.500 0.400L15.100 6.500L14 7.400Q11.200 7.600 10.300 9.700Q9.600 11.500 8.100 14.400L7.300 14.300L1.500 7.200L1.700 6.300Q4.500 5.600 6.200 4.500Q7.900 3.400 7.600 1.100Z" fill="#45c5ce"/></svg>
<span class="t" style="left:142.4px;top:464.0px;font-size:18px;line-height:20px;font-weight:700;color:#fff;-webkit-text-stroke:1.800px #fff;">?</span>
<span class="t" style="left:142.40px;top:464.96px;font-size:18px;line-height:20px;color:#416d9c;font-weight:700;">?</span>
<svg style="left:133.8px;top:490.0px" width="16.0" height="17.0" viewBox="0 0 16 17"><path d="M0.300 15.900l4.800 -4.600" stroke="#5f6670" stroke-width="1.250" fill="none"/><path d="M8.500 0.400L15.100 6.500L14 7.400Q11.200 7.600 10.300 9.700Q9.600 11.500 8.100 14.400L7.300 14.300L1.500 7.200L1.700 6.300Q4.500 5.600 6.200 4.500Q7.900 3.400 7.600 1.100Z" fill="#45c5ce"/></svg>
<span class="t" style="left:142.4px;top:492.0px;font-size:18px;line-height:20px;font-weight:700;color:#fff;-webkit-text-stroke:1.800px #fff;">?</span>
<span class="t" style="left:142.40px;top:492.96px;font-size:18px;line-height:20px;color:#416d9c;font-weight:700;">?</span>
<svg style="left:133.8px;top:518.0px" width="16.0" height="17.0" viewBox="0 0 16 17"><path d="M0.300 15.900l4.800 -4.600" stroke="#5f6670" stroke-width="1.250" fill="none"/><path d="M8.500 0.400L15.100 6.500L14 7.400Q11.200 7.600 10.300 9.700Q9.600 11.500 8.100 14.400L7.300 14.300L1.500 7.200L1.700 6.300Q4.500 5.600 6.200 4.500Q7.900 3.400 7.600 1.100Z" fill="#45c5ce"/></svg>
<span class="t" style="left:142.4px;top:520.0px;font-size:18px;line-height:20px;font-weight:700;color:#fff;-webkit-text-stroke:1.800px #fff;">?</span>
<span class="t" style="left:142.40px;top:520.96px;font-size:18px;line-height:20px;color:#416d9c;font-weight:700;">?</span>
<svg style="left:133.8px;top:546.0px" width="16.0" height="17.0" viewBox="0 0 16 17"><path d="M0.300 15.900l4.800 -4.600" stroke="#5f6670" stroke-width="1.250" fill="none"/><path d="M8.500 0.400L15.100 6.500L14 7.400Q11.200 7.600 10.300 9.700Q9.600 11.500 8.100 14.400L7.300 14.300L1.500 7.200L1.700 6.300Q4.500 5.600 6.200 4.500Q7.900 3.400 7.600 1.100Z" fill="#45c5ce"/></svg>
<span class="t" style="left:142.4px;top:548.0px;font-size:18px;line-height:20px;font-weight:700;color:#fff;-webkit-text-stroke:1.800px #fff;">?</span>
<span class="t" style="left:142.40px;top:548.96px;font-size:18px;line-height:20px;color:#416d9c;font-weight:700;">?</span>
<svg style="left:133.8px;top:574.0px" width="16.0" height="17.0" viewBox="0 0 16 17"><path d="M0.300 15.900l4.800 -4.600" stroke="#5f6670" stroke-width="1.250" fill="none"/><path d="M8.500 0.400L15.100 6.500L14 7.400Q11.200 7.600 10.300 9.700Q9.600 11.500 8.100 14.400L7.300 14.300L1.500 7.200L1.700 6.300Q4.500 5.600 6.200 4.500Q7.900 3.400 7.600 1.100Z" fill="#45c5ce"/></svg>
<span class="t" style="left:142.4px;top:576.0px;font-size:18px;line-height:20px;font-weight:700;color:#fff;-webkit-text-stroke:1.800px #fff;">?</span>
<span class="t" style="left:142.40px;top:576.96px;font-size:18px;line-height:20px;color:#416d9c;font-weight:700;">?</span>
<svg style="left:133.8px;top:602.0px" width="16.0" height="17.0" viewBox="0 0 16 17"><path d="M0.300 15.900l4.800 -4.600" stroke="#5f6670" stroke-width="1.250" fill="none"/><path d="M8.500 0.400L15.100 6.500L14 7.400Q11.200 7.600 10.300 9.700Q9.600 11.500 8.100 14.400L7.300 14.300L1.500 7.200L1.700 6.300Q4.500 5.600 6.200 4.500Q7.900 3.400 7.600 1.100Z" fill="#45c5ce"/></svg>
<span class="t" style="left:142.4px;top:604.0px;font-size:18px;line-height:20px;font-weight:700;color:#fff;-webkit-text-stroke:1.800px #fff;">?</span>
<span class="t" style="left:142.40px;top:604.96px;font-size:18px;line-height:20px;color:#416d9c;font-weight:700;">?</span>
<svg style="left:133.8px;top:650.0px" width="16.0" height="17.0" viewBox="0 0 16 17"><path d="M0.300 15.900l4.800 -4.600" stroke="#5f6670" stroke-width="1.250" fill="none"/><path d="M8.500 0.400L15.100 6.500L14 7.400Q11.200 7.600 10.300 9.700Q9.600 11.500 8.100 14.400L7.300 14.300L1.500 7.200L1.700 6.300Q4.500 5.600 6.200 4.500Q7.900 3.400 7.600 1.100Z" fill="#45c5ce"/></svg>
<span class="t" style="left:142.4px;top:652.0px;font-size:18px;line-height:20px;font-weight:700;color:#fff;-webkit-text-stroke:1.800px #fff;">?</span>
<span class="t" style="left:142.40px;top:652.96px;font-size:18px;line-height:20px;color:#416d9c;font-weight:700;">?</span>
<svg style="left:133.8px;top:698.0px" width="16.0" height="17.0" viewBox="0 0 16 17"><path d="M0.300 15.900l4.800 -4.600" stroke="#5f6670" stroke-width="1.250" fill="none"/><path d="M8.500 0.400L15.100 6.500L14 7.400Q11.200 7.600 10.300 9.700Q9.600 11.500 8.100 14.400L7.300 14.300L1.500 7.200L1.700 6.300Q4.500 5.600 6.200 4.500Q7.900 3.400 7.600 1.100Z" fill="#45c5ce"/></svg>
<span class="t" style="left:142.4px;top:700.0px;font-size:18px;line-height:20px;font-weight:700;color:#fff;-webkit-text-stroke:1.800px #fff;">?</span>
<span class="t" style="left:142.40px;top:700.96px;font-size:18px;line-height:20px;color:#416d9c;font-weight:700;">?</span>
<svg style="left:133.8px;top:726.0px" width="16.0" height="17.0" viewBox="0 0 16 17"><path d="M0.300 15.900l4.800 -4.600" stroke="#5f6670" stroke-width="1.250" fill="none"/><path d="M8.500 0.400L15.100 6.500L14 7.400Q11.200 7.600 10.300 9.700Q9.600 11.500 8.100 14.400L7.300 14.300L1.500 7.200L1.700 6.300Q4.500 5.600 6.200 4.500Q7.900 3.400 7.600 1.100Z" fill="#45c5ce"/></svg>
<span class="t" style="left:142.4px;top:728.0px;font-size:18px;line-height:20px;font-weight:700;color:#fff;-webkit-text-stroke:1.800px #fff;">?</span>
<span class="t" style="left:142.40px;top:728.96px;font-size:18px;line-height:20px;color:#416d9c;font-weight:700;">?</span>
<svg style="left:133.8px;top:754.0px" width="16.0" height="17.0" viewBox="0 0 16 17"><path d="M0.300 15.900l4.800 -4.600" stroke="#5f6670" stroke-width="1.250" fill="none"/><path d="M8.500 0.400L15.100 6.500L14 7.400Q11.200 7.600 10.300 9.700Q9.600 11.500 8.100 14.400L7.300 14.300L1.500 7.200L1.700 6.300Q4.500 5.600 6.200 4.500Q7.900 3.400 7.600 1.100Z" fill="#45c5ce"/></svg>
<span class="t" style="left:142.4px;top:756.0px;font-size:18px;line-height:20px;font-weight:700;color:#fff;-webkit-text-stroke:1.800px #fff;">?</span>
<span class="t" style="left:142.40px;top:756.96px;font-size:18px;line-height:20px;color:#416d9c;font-weight:700;">?</span>
<svg style="left:133.8px;top:802.0px" width="16.0" height="17.0" viewBox="0 0 16 17"><path d="M0.300 15.900l4.800 -4.600" stroke="#5f6670" stroke-width="1.250" fill="none"/><path d="M8.500 0.400L15.100 6.500L14 7.400Q11.200 7.600 10.300 9.700Q9.600 11.500 8.100 14.400L7.300 14.300L1.500 7.200L1.700 6.300Q4.500 5.600 6.200 4.500Q7.900 3.400 7.600 1.100Z" fill="#45c5ce"/></svg>
<span class="t" style="left:142.4px;top:804.0px;font-size:18px;line-height:20px;font-weight:700;color:#fff;-webkit-text-stroke:1.800px #fff;">?</span>
<span class="t" style="left:142.40px;top:804.96px;font-size:18px;line-height:20px;color:#416d9c;font-weight:700;">?</span>
<svg style="left:133.8px;top:830.0px" width="16.0" height="17.0" viewBox="0 0 16 17"><path d="M0.300 15.900l4.800 -4.600" stroke="#5f6670" stroke-width="1.250" fill="none"/><path d="M8.500 0.400L15.100 6.500L14 7.400Q11.200 7.600 10.300 9.700Q9.600 11.500 8.100 14.400L7.300 14.300L1.500 7.200L1.700 6.300Q4.500 5.600 6.200 4.500Q7.900 3.400 7.600 1.100Z" fill="#45c5ce"/></svg>
<span class="t" style="left:142.4px;top:832.0px;font-size:18px;line-height:20px;font-weight:700;color:#fff;-webkit-text-stroke:1.800px #fff;">?</span>
<span class="t" style="left:142.40px;top:832.96px;font-size:18px;line-height:20px;color:#416d9c;font-weight:700;">?</span>
<svg style="left:133.8px;top:858.0px" width="16.0" height="17.0" viewBox="0 0 16 17"><path d="M0.300 15.900l4.800 -4.600" stroke="#5f6670" stroke-width="1.250" fill="none"/><path d="M8.500 0.400L15.100 6.500L14 7.400Q11.200 7.600 10.300 9.700Q9.600 11.500 8.100 14.400L7.300 14.300L1.500 7.200L1.700 6.300Q4.500 5.600 6.200 4.500Q7.900 3.400 7.600 1.100Z" fill="#45c5ce"/></svg>
<span class="t" style="left:142.4px;top:860.0px;font-size:18px;line-height:20px;font-weight:700;color:#fff;-webkit-text-stroke:1.800px #fff;">?</span>
<span class="t" style="left:142.40px;top:860.96px;font-size:18px;line-height:20px;color:#416d9c;font-weight:700;">?</span>
<svg style="left:133.8px;top:886.0px" width="16.0" height="17.0" viewBox="0 0 16 17"><path d="M0.300 15.900l4.800 -4.600" stroke="#5f6670" stroke-width="1.250" fill="none"/><path d="M8.500 0.400L15.100 6.500L14 7.400Q11.200 7.600 10.300 9.700Q9.600 11.500 8.100 14.400L7.300 14.300L1.500 7.200L1.700 6.300Q4.500 5.600 6.200 4.500Q7.900 3.400 7.600 1.100Z" fill="#45c5ce"/></svg>
<span class="t" style="left:142.4px;top:888.0px;font-size:18px;line-height:20px;font-weight:700;color:#fff;-webkit-text-stroke:1.800px #fff;">?</span>
<span class="t" style="left:142.40px;top:888.96px;font-size:18px;line-height:20px;color:#416d9c;font-weight:700;">?</span>
<svg style="left:209.200px;top:217.3px" width="7" height="7"><path d="M5.800 0.200v5.600h-5.600z" fill="#4a4a4a"/></svg>
<svg style="left:209.200px;top:329.3px" width="7" height="7"><path d="M5.800 0.200v5.600h-5.600z" fill="#4a4a4a"/></svg>
<span class="t" style="left:221.70px;top:210.73px;font-size:15.5px;line-height:20px;color:#000;font-weight:700;letter-spacing:0.101px;">Market Research</span>
<span class="t" style="left:237.90px;top:238.63px;font-size:15.8px;line-height:20px;color:#000;letter-spacing:0.351px;">Target Markets</span>
<span class="t" style="left:402.00px;top:238.63px;font-size:15.8px;line-height:20px;color:#000;letter-spacing:-0.141px;">4 days</span>
<span class="t" style="left:237.90px;top:266.63px;font-size:15.8px;line-height:20px;color:#000;letter-spacing:0.189px;">Target Customers</span>
<span class="t" style="left:402.00px;top:266.63px;font-size:15.8px;line-height:20px;color:#000;letter-spacing:-0.141px;">3 days</span>
<span class="t" style="left:237.90px;top:294.63px;font-size:15.8px;line-height:20px;color:#000;letter-spacing:0.127px;max-width:160.500px;overflow:hidden;">Competitors Research</span>
<span class="t" style="left:402.00px;top:294.63px;font-size:15.8px;line-height:20px;color:#000;letter-spacing:-0.141px;">7 days</span>
<span class="t" style="left:221.70px;top:322.73px;font-size:15.5px;line-height:20px;color:#000;font-weight:700;letter-spacing:0.095px;">Product Concept</span>
<span class="t" style="left:237.50px;top:350.63px;font-size:15.8px;line-height:20px;color:#000;letter-spacing:-0.396px;">Stage 1</span>
<span class="t" style="left:402.00px;top:350.63px;font-size:15.8px;line-height:20px;color:#000;letter-spacing:-0.141px;">4 days</span>
<span class="t" style="left:237.50px;top:378.63px;font-size:15.8px;line-height:20px;color:#000;letter-spacing:-0.396px;">Stage 2</span>
<span class="t" style="left:402.00px;top:378.63px;font-size:15.8px;line-height:20px;color:#000;letter-spacing:-0.141px;">5 days</span>
<span class="t" style="left:237.50px;top:858.63px;font-size:15.8px;line-height:20px;color:#000;letter-spacing:-0.396px;">Stage 3</span>
<span class="t" style="left:402.00px;top:858.63px;font-size:15.8px;line-height:20px;color:#000;letter-spacing:-0.141px;">7 days</span>
<span class="t" style="left:221.70px;top:886.63px;font-size:15.8px;line-height:20px;color:#000;letter-spacing:-0.310px;">Release</span>
<div style="left:674px;top:162px;width:902px;height:45px;background:#e6e6e6;"></div>
<div style="left:674px;top:207px;width:905px;height:740px;background:#fff;"></div>
<div style="left:748.0px;top:207px;width:50px;height:740px;background:#f5f5f5;"></div>
<div style="left:923.0px;top:207px;width:50px;height:740px;background:#f5f5f5;"></div>
<div style="left:1098.0px;top:207px;width:50px;height:740px;background:#f5f5f5;"></div>
<div style="left:1273.0px;top:207px;width:50px;height:740px;background:#f5f5f5;"></div>
<div style="left:1448.0px;top:207px;width:50px;height:740px;background:#f5f5f5;"></div>
<div style="left:674px;top:206.5px;width:902px;height:1px;background:#b0b0b0;"></div>
<div style="left:698.0px;top:184px;width:1px;height:23px;background:#d8d8d8;"></div>
<div style="left:723.0px;top:184px;width:1px;height:23px;background:#d8d8d8;"></div>
<div style="left:748.0px;top:184px;width:1px;height:23px;background:#d8d8d8;"></div>
<div style="left:773.0px;top:184px;width:1px;height:23px;background:#d8d8d8;"></div>
<div style="left:798.0px;top:168px;width:1px;height:39px;background:#c4c4c4;"></div>
<div style="left:823.0px;top:184px;width:1px;height:23px;background:#d8d8d8;"></div>
<div style="left:848.0px;top:184px;width:1px;height:23px;background:#d8d8d8;"></div>
<div style="left:873.0px;top:184px;width:1px;height:23px;background:#d8d8d8;"></div>
<div style="left:898.0px;top:184px;width:1px;height:23px;background:#d8d8d8;"></div>
<div style="left:923.0px;top:184px;width:1px;height:23px;background:#d8d8d8;"></div>
<div style="left:948.0px;top:184px;width:1px;height:23px;background:#d8d8d8;"></div>
<div style="left:973.0px;top:168px;width:1px;height:39px;background:#c4c4c4;"></div>
<div style="left:998.0px;top:184px;width:1px;height:23px;background:#d8d8d8;"></div>
<div style="left:1023.0px;top:184px;width:1px;height:23px;background:#d8d8d8;"></div>
<div style="left:1048.0px;top:184px;width:1px;height:23px;background:#d8d8d8;"></div>
<div style="left:1073.0px;top:184px;width:1px;height:23px;background:#d8d8d8;"></div>
<div style="left:1098.0px;top:184px;width:1px;height:23px;background:#d8d8d8;"></div>
<div style="left:1123.0px;top:184px;width:1px;height:23px;background:#d8d8d8;"></div>
<div style="left:1148.0px;top:168px;width:1px;height:39px;background:#c4c4c4;"></div>
<div style="left:1173.0px;top:184px;width:1px;height:23px;background:#d8d8d8;"></div>
<div style="left:1198.0px;top:184px;width:1px;height:23px;background:#d8d8d8;"></div>
<div style="left:1223.0px;top:184px;width:1px;height:23px;background:#d8d8d8;"></div>
<div style="left:1248.0px;top:184px;width:1px;height:23px;background:#d8d8d8;"></div>
<div style="left:1273.0px;top:184px;width:1px;height:23px;background:#d8d8d8;"></div>
<div style="left:1298.0px;top:184px;width:1px;height:23px;background:#d8d8d8;"></div>
<div style="left:1323.0px;top:168px;width:1px;height:39px;background:#c4c4c4;"></div>
<div style="left:1348.0px;top:184px;width:1px;height:23px;background:#d8d8d8;"></div>
<div style="left:1373.0px;top:184px;width:1px;height:23px;background:#d8d8d8;"></div>
<div style="left:1398.0px;top:184px;width:1px;height:23px;background:#d8d8d8;"></div>
<div style="left:1423.0px;top:184px;width:1px;height:23px;background:#d8d8d8;"></div>
<div style="left:1448.0px;top:184px;width:1px;height:23px;background:#d8d8d8;"></div>
<div style="left:1473.0px;top:184px;width:1px;height:23px;background:#d8d8d8;"></div>
<div style="left:1498.0px;top:168px;width:1px;height:39px;background:#c4c4c4;"></div>
<div style="left:1523.0px;top:184px;width:1px;height:23px;background:#d8d8d8;"></div>
<div style="left:1548.0px;top:184px;width:1px;height:23px;background:#d8d8d8;"></div>
<div style="left:1573.0px;top:184px;width:1px;height:23px;background:#d8d8d8;"></div>
<span class="t" style="left:675.30px;top:165.61px;font-size:12.1px;line-height:20px;color:#6a6a6a;letter-spacing:-0.227px;">22</span>
<span class="t" style="left:804.80px;top:165.61px;font-size:12.1px;line-height:20px;color:#6a6a6a;letter-spacing:0.541px;">11 Apr &#x27;22</span>
<span class="t" style="left:979.80px;top:165.61px;font-size:12.1px;line-height:20px;color:#6a6a6a;letter-spacing:0.451px;">18 Apr &#x27;22</span>
<span class="t" style="left:1154.80px;top:165.61px;font-size:12.1px;line-height:20px;color:#6a6a6a;letter-spacing:0.451px;">25 Apr &#x27;22</span>
<span class="t" style="left:1329.20px;top:165.61px;font-size:12.1px;line-height:20px;color:#6a6a6a;letter-spacing:0.492px;">02 May &#x27;22</span>
<span class="t" style="left:1504.20px;top:165.61px;font-size:12.1px;line-height:20px;color:#6a6a6a;letter-spacing:0.492px;">09 May &#x27;22</span>
<span class="t" style="left:680.30px;top:185.41px;font-size:12.1px;line-height:20px;color:#6a6a6a;">W</span>
<span class="t" style="left:707.30px;top:185.41px;font-size:12.1px;line-height:20px;color:#6a6a6a;">T</span>
<span class="t" style="left:732.30px;top:185.41px;font-size:12.1px;line-height:20px;color:#6a6a6a;">F</span>
<span class="t" style="left:757.00px;top:185.41px;font-size:12.1px;line-height:20px;color:#6a6a6a;">S</span>
<span class="t" style="left:782.00px;top:185.41px;font-size:12.1px;line-height:20px;color:#6a6a6a;">S</span>
<span class="t" style="left:806.00px;top:185.41px;font-size:12.1px;line-height:20px;color:#6a6a6a;">M</span>
<span class="t" style="left:832.30px;top:185.41px;font-size:12.1px;line-height:20px;color:#6a6a6a;">T</span>
<span class="t" style="left:855.30px;top:185.41px;font-size:12.1px;line-height:20px;color:#6a6a6a;">W</span>
<span class="t" style="left:882.30px;top:185.41px;font-size:12.1px;line-height:20px;color:#6a6a6a;">T</span>
<span class="t" style="left:907.30px;top:185.41px;font-size:12.1px;line-height:20px;color:#6a6a6a;">F</span>
<span class="t" style="left:932.00px;top:185.41px;font-size:12.1px;line-height:20px;color:#6a6a6a;">S</span>
<span class="t" style="left:957.00px;top:185.41px;font-size:12.1px;line-height:20px;color:#6a6a6a;">S</span>
<span class="t" style="left:981.00px;top:185.41px;font-size:12.1px;line-height:20px;color:#6a6a6a;">M</span>
<span class="t" style="left:1007.30px;top:185.41px;font-size:12.1px;line-height:20px;color:#6a6a6a;">T</span>
<span class="t" style="left:1030.30px;top:185.41px;font-size:12.1px;line-height:20px;color:#6a6a6a;">W</span>
<span class="t" style="left:1057.30px;top:185.41px;font-size:12.1px;line-height:20px;color:#6a6a6a;">T</span>
<span class="t" style="left:1082.30px;top:185.41px;font-size:12.1px;line-height:20px;color:#6a6a6a;">F</span>
<span class="t" style="left:1107.00px;top:185.41px;font-size:12.1px;line-height:20px;color:#6a6a6a;">S</span>
<span class="t" style="left:1132.00px;top:185.41px;font-size:12.1px;line-height:20px;color:#6a6a6a;">S</span>
<span class="t" style="left:1156.00px;top:185.41px;font-size:12.1px;line-height:20px;color:#6a6a6a;">M</span>
<span class="t" style="left:1182.30px;top:185.41px;font-size:12.1px;line-height:20px;color:#6a6a6a;">T</span>
<span class="t" style="left:1205.30px;top:185.41px;font-size:12.1px;line-height:20px;color:#6a6a6a;">W</span>
<span class="t" style="left:1232.30px;top:185.41px;font-size:12.1px;line-height:20px;color:#6a6a6a;">T</span>
<span class="t" style="left:1257.30px;top:185.41px;font-size:12.1px;line-height:20px;color:#6a6a6a;">F</span>
<span class="t" style="left:1282.00px;top:185.41px;font-size:12.1px;line-height:20px;color:#6a6a6a;">S</span>
<span class="t" style="left:1307.00px;top:185.41px;font-size:12.1px;line-height:20px;color:#6a6a6a;">S</span>
<span class="t" style="left:1331.00px;top:185.41px;font-size:12.1px;line-height:20px;color:#6a6a6a;">M</span>
<span class="t" style="left:1357.30px;top:185.41px;font-size:12.1px;line-height:20px;color:#6a6a6a;">T</span>
<span class="t" style="left:1380.30px;top:185.41px;font-size:12.1px;line-height:20px;color:#6a6a6a;">W</span>
<span class="t" style="left:1407.30px;top:185.41px;font-size:12.1px;line-height:20px;color:#6a6a6a;">T</span>
<span class="t" style="left:1432.30px;top:185.41px;font-size:12.1px;line-height:20px;color:#6a6a6a;">F</span>
<span class="t" style="left:1457.00px;top:185.41px;font-size:12.1px;line-height:20px;color:#6a6a6a;">S</span>
<span class="t" style="left:1482.00px;top:185.41px;font-size:12.1px;line-height:20px;color:#6a6a6a;">S</span>
<span class="t" style="left:1506.00px;top:185.41px;font-size:12.1px;line-height:20px;color:#6a6a6a;">M</span>
<span class="t" style="left:1532.30px;top:185.41px;font-size:12.1px;line-height:20px;color:#6a6a6a;">T</span>
<span class="t" style="left:1555.30px;top:185.41px;font-size:12.1px;line-height:20px;color:#6a6a6a;">W</span>
<div style="left:674px;top:375px;width:903px;height:1px;background:#6a6a6a;"></div>
<div style="left:674px;top:403px;width:903px;height:1px;background:#6a6a6a;"></div>
<div style="left:1576px;top:162px;width:3px;height:785px;background:#fff;"></div>
<div style="left:1577px;top:164.3px;width:1.5px;height:725px;background:#5c5c5c;"></div>
<div style="left:1577px;top:164.3px;width:2px;height:1.2px;background:#5c5c5c;"></div>
<div style="left:1577px;top:182.2px;width:2px;height:1.2px;background:#5c5c5c;"></div>
<div style="left:1577px;top:888.3px;width:2px;height:1.2px;background:#5c5c5c;"></div>
<div style="left:1577px;top:889.5px;width:2px;height:30.5px;background:#f0f0f0;"></div>
<div style="left:1577px;top:920px;width:2px;height:18px;background:#fff;border:1.500px solid #5c5c5c;border-right:none;"></div>
<div style="left:1577px;top:944px;width:2px;height:3px;background:#5c5c5c;"></div>
<div style="left:698px;top:207px;width:1px;height:740px;background:#8db998;"></div>
<div style="left:1423px;top:207px;width:1px;height:740px;background:transparent;background-image:repeating-linear-gradient(to bottom,#7a7a7a 0,#7a7a7a 1px,transparent 1px,transparent 4px);"></div>
<div style="left:698px;top:221.2px;width:276px;height:5.6px;background:#31a0ac;"></div>
<div style="left:697px;top:244.2px;width:153px;height:10.7px;background:#72cbd5;border-left:3px solid #3e9faa;border-right:3px solid #3e9faa;"></div>
<div style="left:697px;top:272.2px;width:128px;height:10.7px;background:#72cbd5;border-left:3px solid #3e9faa;border-right:3px solid #3e9faa;"></div>
<div style="left:697px;top:300.2px;width:278px;height:10.7px;background:#72cbd5;border-left:3px solid #3e9faa;border-right:3px solid #3e9faa;"></div>
<div style="left:874px;top:333.2px;width:350px;height:5.6px;background:#31a0ac;"></div>
<svg style="left:874px;top:327.7px" width="7" height="6"><path d="M0.600 6v-5.400h5.400" fill="none" stroke="#6fc4cd" stroke-width="1.200"/></svg>
<div style="left:874.4px;top:356.2px;width:149.0px;height:10.7px;background:transparent;background:linear-gradient(to right,rgba(114,203,213,0) 0,rgba(114,203,213,1) 8px,rgba(114,203,213,1) 141.0px,rgba(114,203,213,0) 149.0px);"></div>
<div style="left:874.4px;top:384.2px;width:172.89999999999998px;height:10.7px;background:transparent;background:linear-gradient(to right,rgba(114,203,213,0) 0,rgba(114,203,213,1) 8px,rgba(114,203,213,1) 164.9px,rgba(114,203,213,0) 172.9px);"></div>
<div style="left:874.4px;top:412.2px;width:197.89999999999998px;height:10.7px;background:transparent;background:linear-gradient(to right,rgba(114,203,213,0) 0,rgba(114,203,213,1) 8px,rgba(114,203,213,1) 189.9px,rgba(114,203,213,0) 197.9px);"></div>
<div style="left:874.4px;top:440.2px;width:347.6px;height:10.7px;background:transparent;background:linear-gradient(to right,rgba(114,203,213,0) 0,rgba(114,203,213,1) 8px,rgba(114,203,213,1) 339.6px,rgba(114,203,213,0) 347.6px);"></div>
<div style="left:698px;top:473.2px;width:176.20000000000005px;height:5.6px;background:#31a0ac;"></div>
<div style="left:699.3px;top:496.2px;width:173.4000000000001px;height:10.7px;background:transparent;background:linear-gradient(to right,rgba(114,203,213,0) 0,rgba(114,203,213,1) 8px,rgba(114,203,213,1) 165.4px,rgba(114,203,213,0) 173.4px);"></div>
<div style="left:699.3px;top:524.2px;width:147.10000000000002px;height:10.7px;background:transparent;background:linear-gradient(to right,rgba(114,203,213,0) 0,rgba(114,203,213,1) 8px,rgba(114,203,213,1) 139.1px,rgba(114,203,213,0) 147.1px);"></div>
<div style="left:698px;top:557.2px;width:501px;height:5.6px;background:#31a0ac;"></div>
<div style="left:699.3px;top:580.2px;width:372.9000000000001px;height:10.7px;background:transparent;background:linear-gradient(to right,rgba(114,203,213,0) 0,rgba(114,203,213,1) 8px,rgba(114,203,213,1) 364.9px,rgba(114,203,213,0) 372.9px);"></div>
<div style="left:699.3px;top:608.2px;width:372.9000000000001px;height:10.7px;background:transparent;background:linear-gradient(to right,rgba(114,203,213,0) 0,rgba(114,203,213,1) 8px,rgba(114,203,213,1) 364.9px,rgba(114,203,213,0) 372.9px);"></div>
<div style="left:699.3px;top:656.2px;width:497.70000000000005px;height:10.7px;background:transparent;background:linear-gradient(to right,rgba(114,203,213,0) 0,rgba(114,203,213,1) 8px,rgba(114,203,213,1) 489.7px,rgba(114,203,213,0) 497.7px);"></div>
<div style="left:698px;top:704.3px;width:700px;height:5.2px;background:transparent;background:linear-gradient(to right,rgba(114,203,213,0) 0,rgba(114,203,213,1) 8px,rgba(114,203,213,1) 692.0px,rgba(114,203,213,0) 700.0px);"></div>
<div style="left:698px;top:709.2px;width:700.7px;height:5.6px;background:#31a0ac;"></div>
<div style="left:699.3px;top:732.2px;width:672.7px;height:10.7px;background:transparent;background:linear-gradient(to right,rgba(114,203,213,0) 0,rgba(114,203,213,1) 8px,rgba(114,203,213,1) 664.7px,rgba(114,203,213,0) 672.7px);"></div>
<div style="left:698px;top:765.2px;width:276px;height:5.6px;background:#31a0ac;"></div>
<div style="left:699.3px;top:808.2px;width:198.20000000000005px;height:10.7px;background:transparent;background:linear-gradient(to right,rgba(114,203,213,0) 0,rgba(114,203,213,1) 8px,rgba(114,203,213,1) 190.2px,rgba(114,203,213,0) 198.2px);"></div>
<div style="left:699.3px;top:836.2px;width:173.4000000000001px;height:10.7px;background:transparent;background:linear-gradient(to right,rgba(114,203,213,0) 0,rgba(114,203,213,1) 8px,rgba(114,203,213,1) 165.4px,rgba(114,203,213,0) 173.4px);"></div>
<div style="left:699.3px;top:864.2px;width:273.20000000000005px;height:10.7px;background:transparent;background:linear-gradient(to right,rgba(114,203,213,0) 0,rgba(114,203,213,1) 8px,rgba(114,203,213,1) 265.2px,rgba(114,203,213,0) 273.2px);"></div>
<span class="t" style="left:706.30px;top:207.59px;font-size:15.6px;line-height:20px;color:#000;font-weight:700;letter-spacing:0.478px;">Market Research</span>
<span class="t" style="left:882.00px;top:319.59px;font-size:15.6px;line-height:20px;color:#000;font-weight:700;letter-spacing:0.472px;">Product Concept</span>
<span class="t" style="left:706.30px;top:459.59px;font-size:15.6px;line-height:20px;color:#000;font-weight:700;letter-spacing:0.357px;">Features&amp;Functions</span>
<span class="t" style="left:706.30px;top:543.59px;font-size:15.6px;line-height:20px;color:#000;font-weight:700;letter-spacing:0.799px;">Budget</span>
<span class="t" style="left:706.30px;top:695.59px;font-size:15.6px;line-height:20px;color:#000;font-weight:700;letter-spacing:0.632px;">Pricing Strategy</span>
<span class="t" style="left:706.30px;top:751.59px;font-size:15.6px;line-height:20px;color:#000;font-weight:700;letter-spacing:0.683px;">Sales &amp; Distribution Strategy</span>
<div style="left:0px;top:161.6px;width:1579px;height:1.1px;background:#dcdcdc;"></div>
<div style="left:148px;top:403px;width:520px;height:452.5px;background:#f0f0f0;border:1px solid #c6c6c6;border-top:1px solid #8e8e8e;background:linear-gradient(to bottom,#fff 0,#fff 442px,#d6d6d6 451.500px);border-bottom:1px solid #c4c4c4;box-shadow:0 1px 2px rgba(0,0,0,.18);"></div>
<div style="left:154px;top:409.2px;width:509px;height:423.8px;background:#fff;border:1px solid #adadad;overflow:hidden;"></div>
<div style="left:642.5px;top:410.5px;width:19.5px;height:421.5px;background:#f0f0f0;"></div>
<div style="left:642.5px;top:477.5px;width:18.5px;height:288.5px;background:#cdcdcd;"></div>
<svg style="left:646px;top:416px" width="12" height="9"><path d="M1.300 7l4.700 -4.800l4.700 4.800" fill="none" stroke="#555" stroke-width="1.700"/></svg>
<svg style="left:646px;top:817px" width="12" height="9"><path d="M1.300 1.500l4.700 4.800l4.700 -4.800" fill="none" stroke="#555" stroke-width="1.700"/></svg>
<div style="left:663px;top:844px;width:2px;height:2px;background:#b0b0b0;"></div>
<div style="left:663px;top:850px;width:2px;height:2px;background:#b0b0b0;"></div>
<div style="left:657.5px;top:850px;width:2px;height:2px;background:#b0b0b0;"></div>
<div style="left:167px;top:411px;width:1px;height:421px;background:transparent;background-image:repeating-linear-gradient(to bottom,#9a9a9a 0,#9a9a9a 1px,transparent 1px,transparent 2px);"></div>
<div style="left:186px;top:411px;width:1px;height:11px;background:transparent;background-image:repeating-linear-gradient(to bottom,#9a9a9a 0,#9a9a9a 1px,transparent 1px,transparent 2px);"></div>
<div style="left:186px;top:455px;width:1px;height:77px;background:transparent;background-image:repeating-linear-gradient(to bottom,#9a9a9a 0,#9a9a9a 1px,transparent 1px,transparent 2px);"></div>
<div style="left:186px;top:565px;width:1px;height:33px;background:transparent;background-image:repeating-linear-gradient(to bottom,#9a9a9a 0,#9a9a9a 1px,transparent 1px,transparent 2px);"></div>
<div style="left:186px;top:631px;width:1px;height:55px;background:transparent;background-image:repeating-linear-gradient(to bottom,#9a9a9a 0,#9a9a9a 1px,transparent 1px,transparent 2px);"></div>
<div style="left:186px;top:719px;width:1px;height:33px;background:transparent;background-image:repeating-linear-gradient(to bottom,#9a9a9a 0,#9a9a9a 1px,transparent 1px,transparent 2px);"></div>
<div style="left:186px;top:807px;width:1px;height:25px;background:transparent;background-image:repeating-linear-gradient(to bottom,#9a9a9a 0,#9a9a9a 1px,transparent 1px,transparent 2px);"></div>
<div style="left:212px;top:454.5px;width:83px;height:21.5px;background:#ebebeb;"></div>
<div style="left:187px;top:422px;width:9px;height:1px;background:transparent;background-image:repeating-linear-gradient(to right,#9a9a9a 0,#9a9a9a 1px,transparent 1px,transparent 2px);"></div>
<div style="left:196px;top:412.9px;width:16px;height:16px;background:#fff;border:1.100px solid #333;"></div>
<span class="t" style="left:214.60px;top:411.53px;font-size:15.2px;line-height:20px;color:#000;font-weight:700;letter-spacing:-0.389px;">4  Competitors Research</span>
<div style="left:162.2px;top:438.8px;width:10.6px;height:10.8px;background:#fff;border:1px solid #9a9a9a;background:linear-gradient(to bottom,#fff 0,#fff 50%,#d9d9d9 100%);border-radius:1px;"></div>
<div style="left:173px;top:444px;width:4px;height:1px;background:transparent;background-image:repeating-linear-gradient(to right,#9a9a9a 0,#9a9a9a 1px,transparent 1px,transparent 2px);"></div>
<div style="left:164.6px;top:443.4px;width:6px;height:1.2px;background:#3b4fa0;"></div>
<span class="t" style="left:180.00px;top:433.53px;font-size:15.2px;line-height:20px;color:#000;font-weight:700;letter-spacing:-0.407px;">5  Product Concept</span>
<div style="left:187px;top:466px;width:9px;height:1px;background:transparent;background-image:repeating-linear-gradient(to right,#9a9a9a 0,#9a9a9a 1px,transparent 1px,transparent 2px);"></div>
<div style="left:196px;top:456.9px;width:16px;height:16px;background:#fff;border:1.100px solid #333;"></div>
<svg style="left:196px;top:456.9px" width="16" height="16"><path d="M3 8.300l3.200 3.300l6.600 -7.600" fill="none" stroke="#333" stroke-width="1.200"/></svg>
<span class="t" style="left:214.60px;top:455.53px;font-size:15.2px;line-height:20px;color:#000;font-weight:700;letter-spacing:-0.422px;">6  Stage 1</span>
<div style="left:187px;top:488px;width:9px;height:1px;background:transparent;background-image:repeating-linear-gradient(to right,#9a9a9a 0,#9a9a9a 1px,transparent 1px,transparent 2px);"></div>
<span class="t" style="left:198.80px;top:477.53px;font-size:15.2px;line-height:20px;color:#000;font-weight:700;letter-spacing:-0.372px;">7  Stage 2</span>
<div style="left:187px;top:510px;width:9px;height:1px;background:transparent;background-image:repeating-linear-gradient(to right,#9a9a9a 0,#9a9a9a 1px,transparent 1px,transparent 2px);"></div>
<div style="left:196px;top:500.9px;width:16px;height:16px;background:#fff;border:1.100px solid #333;"></div>
<span class="t" style="left:214.60px;top:499.53px;font-size:15.2px;line-height:20px;color:#000;font-weight:700;letter-spacing:-0.352px;">8  Stage 3</span>
<div style="left:187px;top:532px;width:9px;height:1px;background:transparent;background-image:repeating-linear-gradient(to right,#9a9a9a 0,#9a9a9a 1px,transparent 1px,transparent 2px);"></div>
<div style="left:196px;top:522.9px;width:16px;height:16px;background:#fff;border:1.100px solid #333;"></div>
<span class="t" style="left:214.60px;top:521.53px;font-size:15.2px;line-height:20px;color:#000;font-weight:700;letter-spacing:-0.225px;">9  Report</span>
<div style="left:177px;top:544.9px;width:16px;height:16px;background:#fff;border:1.100px solid #333;"></div>
<div style="left:162.2px;top:548.8px;width:10.6px;height:10.8px;background:#fff;border:1px solid #9a9a9a;background:linear-gradient(to bottom,#fff 0,#fff 50%,#d9d9d9 100%);border-radius:1px;"></div>
<div style="left:173px;top:554px;width:4px;height:1px;background:transparent;background-image:repeating-linear-gradient(to right,#9a9a9a 0,#9a9a9a 1px,transparent 1px,transparent 2px);"></div>
<div style="left:164.6px;top:553.4px;width:6px;height:1.2px;background:#3b4fa0;"></div>
<span class="t" style="left:195.50px;top:543.53px;font-size:15.2px;line-height:20px;color:#000;font-weight:700;letter-spacing:-0.271px;">10  Features&amp;Functions</span>
<div style="left:187px;top:576px;width:9px;height:1px;background:transparent;background-image:repeating-linear-gradient(to right,#9a9a9a 0,#9a9a9a 1px,transparent 1px,transparent 2px);"></div>
<div style="left:196px;top:566.9px;width:16px;height:16px;background:#fff;border:1.100px solid #333;"></div>
<span class="t" style="left:214.60px;top:565.53px;font-size:15.2px;line-height:20px;color:#000;font-weight:700;letter-spacing:-0.159px;">11  Required Materials</span>
<div style="left:187px;top:598px;width:9px;height:1px;background:transparent;background-image:repeating-linear-gradient(to right,#9a9a9a 0,#9a9a9a 1px,transparent 1px,transparent 2px);"></div>
<div style="left:196px;top:588.9px;width:16px;height:16px;background:#fff;border:1.100px solid #333;"></div>
<span class="t" style="left:214.60px;top:587.53px;font-size:15.2px;line-height:20px;color:#000;font-weight:700;letter-spacing:-0.181px;">12  Required Methods</span>
<div style="left:177px;top:610.9px;width:16px;height:16px;background:#fff;border:1.100px solid #333;"></div>
<div style="left:162.2px;top:614.8px;width:10.6px;height:10.8px;background:#fff;border:1px solid #9a9a9a;background:linear-gradient(to bottom,#fff 0,#fff 50%,#d9d9d9 100%);border-radius:1px;"></div>
<div style="left:173px;top:620px;width:4px;height:1px;background:transparent;background-image:repeating-linear-gradient(to right,#9a9a9a 0,#9a9a9a 1px,transparent 1px,transparent 2px);"></div>
<div style="left:164.6px;top:619.4px;width:6px;height:1.2px;background:#3b4fa0;"></div>
<span class="t" style="left:195.50px;top:609.53px;font-size:15.2px;line-height:20px;color:#000;font-weight:700;letter-spacing:-0.134px;">13  Budget</span>
<div style="left:187px;top:642px;width:9px;height:1px;background:transparent;background-image:repeating-linear-gradient(to right,#9a9a9a 0,#9a9a9a 1px,transparent 1px,transparent 2px);"></div>
<div style="left:196px;top:632.9px;width:16px;height:16px;background:#fff;border:1.100px solid #333;"></div>
<span class="t" style="left:214.60px;top:631.53px;font-size:15.2px;line-height:20px;color:#000;font-weight:700;letter-spacing:-0.277px;">14  Work with Sponsors</span>
<div style="left:187px;top:664px;width:9px;height:1px;background:transparent;background-image:repeating-linear-gradient(to right,#9a9a9a 0,#9a9a9a 1px,transparent 1px,transparent 2px);"></div>
<div style="left:196px;top:654.9px;width:16px;height:16px;background:#fff;border:1.100px solid #333;"></div>
<span class="t" style="left:214.60px;top:653.53px;font-size:15.2px;line-height:20px;color:#000;font-weight:700;letter-spacing:-0.177px;">15  Work with Contractors</span>
<div style="left:187px;top:686px;width:9px;height:1px;background:transparent;background-image:repeating-linear-gradient(to right,#9a9a9a 0,#9a9a9a 1px,transparent 1px,transparent 2px);"></div>
<div style="left:196px;top:676.9px;width:16px;height:16px;background:#fff;border:1.100px solid #333;"></div>
<span class="t" style="left:214.60px;top:675.53px;font-size:15.2px;line-height:20px;color:#000;font-weight:700;letter-spacing:-0.310px;">16  Model Product Life Cycle</span>
<div style="left:177px;top:698.9px;width:16px;height:16px;background:#fff;border:1.100px solid #333;"></div>
<div style="left:162.2px;top:702.8px;width:10.6px;height:10.8px;background:#fff;border:1px solid #9a9a9a;background:linear-gradient(to bottom,#fff 0,#fff 50%,#d9d9d9 100%);border-radius:1px;"></div>
<div style="left:173px;top:708px;width:4px;height:1px;background:transparent;background-image:repeating-linear-gradient(to right,#9a9a9a 0,#9a9a9a 1px,transparent 1px,transparent 2px);"></div>
<div style="left:164.6px;top:707.4px;width:6px;height:1.2px;background:#3b4fa0;"></div>
<span class="t" style="left:195.50px;top:697.53px;font-size:15.2px;line-height:20px;color:#000;font-weight:700;letter-spacing:-0.286px;">17  Pricing Strategy</span>
<div style="left:187px;top:730px;width:9px;height:1px;background:transparent;background-image:repeating-linear-gradient(to right,#9a9a9a 0,#9a9a9a 1px,transparent 1px,transparent 2px);"></div>
<div style="left:196px;top:720.9px;width:16px;height:16px;background:#fff;border:1.100px solid #333;"></div>
<span class="t" style="left:214.60px;top:719.53px;font-size:15.2px;line-height:20px;color:#000;font-weight:700;letter-spacing:-0.243px;">18  Plan A</span>
<div style="left:187px;top:752px;width:9px;height:1px;background:transparent;background-image:repeating-linear-gradient(to right,#9a9a9a 0,#9a9a9a 1px,transparent 1px,transparent 2px);"></div>
<div style="left:196px;top:742.9px;width:16px;height:16px;background:#fff;border:1.100px solid #333;"></div>
<span class="t" style="left:214.60px;top:741.53px;font-size:15.2px;line-height:20px;color:#000;font-weight:700;letter-spacing:-0.349px;">19  Plan B</span>
<div style="left:177px;top:764.9px;width:16px;height:16px;background:#fff;border:1.100px solid #333;"></div>
<div style="left:168px;top:774px;width:9px;height:1px;background:transparent;background-image:repeating-linear-gradient(to right,#9a9a9a 0,#9a9a9a 1px,transparent 1px,transparent 2px);"></div>
<span class="t" style="left:195.50px;top:763.53px;font-size:15.2px;line-height:20px;color:#000;font-weight:700;letter-spacing:0.040px;">20  Marketing&amp;Promotion</span>
<div style="left:177px;top:786.9px;width:16px;height:16px;background:#fff;border:1.100px solid #333;"></div>
<div style="left:162.2px;top:790.8px;width:10.6px;height:10.8px;background:#fff;border:1px solid #9a9a9a;background:linear-gradient(to bottom,#fff 0,#fff 50%,#d9d9d9 100%);border-radius:1px;"></div>
<div style="left:173px;top:796px;width:4px;height:1px;background:transparent;background-image:repeating-linear-gradient(to right,#9a9a9a 0,#9a9a9a 1px,transparent 1px,transparent 2px);"></div>
<div style="left:164.6px;top:795.4px;width:6px;height:1.2px;background:#3b4fa0;"></div>
<span class="t" style="left:195.50px;top:785.53px;font-size:15.2px;line-height:20px;color:#000;font-weight:700;letter-spacing:-0.192px;">21  Sales &amp; Distribution Strategy</span>
<div style="left:187px;top:818px;width:9px;height:1px;background:transparent;background-image:repeating-linear-gradient(to right,#9a9a9a 0,#9a9a9a 1px,transparent 1px,transparent 2px);"></div>
<div style="left:196px;top:808.9px;width:16px;height:16px;background:#fff;border:1.100px solid #333;"></div>
<span class="t" style="left:214.60px;top:807.53px;font-size:15.2px;line-height:20px;color:#000;font-weight:700;letter-spacing:-0.324px;">22  Stage 1</span>
<div style="left:196px;top:831px;width:16px;height:2px;background:#333;"></div>
<svg style="left:0;top:0" width="0" height="0"><defs><clipPath id="c1r"><polygon points="640.00,330.00 700.00,330.00 700.00,370.45 675.30,370.45 675.30,382.05 667.75,382.05 667.75,370.45 640.00,370.45"/></clipPath><clipPath id="c1w"><polygon points="640.00,330.00 700.00,330.00 700.00,366.65 678.40,366.65 678.40,381.00 664.65,381.00 664.65,366.65 640.00,366.65"/></clipPath></defs></svg>
<svg style="left:0;top:0;filter:drop-shadow(0.500px 1.500px 1.600px rgba(0,0,0,.5));" width="1579" height="947"><g clip-path="url(#c1w)"><text transform="translate(661.9,376.05) scale(1.0,1)" font-family="Liberation Sans, sans-serif" font-size="32.3" fill="#fff" stroke="#fff" stroke-width="9.9" stroke-linejoin="round">1</text></g></svg>
<svg style="left:0;top:0" width="1579" height="947"><g clip-path="url(#c1r)"><text transform="translate(661.9,376.05) scale(1.0,1)" font-family="Liberation Sans, sans-serif" font-size="32.3" fill="#ff2e0a" stroke="#ff2e0a" stroke-width="3.7" stroke-linejoin="miter">1</text></g></svg>
<svg style="left:0;top:0;filter:drop-shadow(0.500px 1.500px 1.600px rgba(0,0,0,.5));" width="1579" height="947"><g><text transform="translate(157.0,469.0) scale(0.96,1)" font-family="Liberation Sans, sans-serif" font-size="36" fill="#fff" stroke="#fff" stroke-width="9.9" stroke-linejoin="round">2</text></g></svg>
<svg style="left:0;top:0" width="1579" height="947"><g><text transform="translate(157.0,469.0) scale(0.96,1)" font-family="Liberation Sans, sans-serif" font-size="36" fill="#ff2e0a" stroke="#ff2e0a" stroke-width="3.7" stroke-linejoin="miter">2</text></g></svg>
</div></body></html>
